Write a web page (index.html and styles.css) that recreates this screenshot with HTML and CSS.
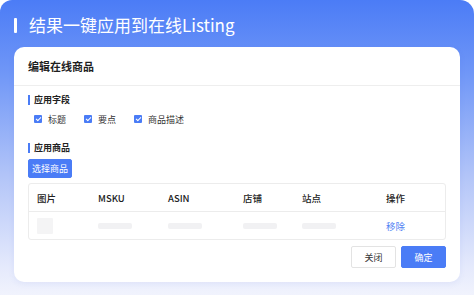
FILE: index.html
```html
<!DOCTYPE html>
<html>
<head>
    <meta charset="UTF-8">
    <title>结果一键应用到在线Listing</title>
    <link rel="stylesheet" href="styles.css">
</head>
<body>
    <div class="panel">
        <div class="panel-title">
            <span class="title-bar"></span>
            <span>结果一键应用到在线Listing</span>
        </div>

        <div class="card">
            <div class="card-header">编辑在线商品</div>
            <div class="card-body">
                <div class="section-title">应用字段</div>
                <div class="checks">
                    <label class="check"><span class="box"></span>标题</label>
                    <label class="check"><span class="box"></span>要点</label>
                    <label class="check"><span class="box"></span>商品描述</label>
                </div>

                <div class="section-title">应用商品</div>
                <button class="btn btn-primary btn-pick">选择商品</button>

                <div class="table">
                    <div class="row head">
                        <div>图片</div>
                        <div>MSKU</div>
                        <div>ASIN</div>
                        <div>店铺</div>
                        <div>站点</div>
                        <div>操作</div>
                    </div>
                    <div class="row">
                        <div><span class="thumb"></span></div>
                        <div><span class="skeleton"></span></div>
                        <div><span class="skeleton"></span></div>
                        <div><span class="skeleton"></span></div>
                        <div><span class="skeleton"></span></div>
                        <div><a class="link">移除</a></div>
                    </div>
                </div>

                <div class="footer">
                    <button class="btn btn-default">关闭</button>
                    <button class="btn btn-primary">确定</button>
                </div>
            </div>
        </div>
    </div>
</body>
</html>
```

FILE: styles.css
```css
body {
    margin: 0;
    background: #ffffff;
    font-family: "Noto Sans CJK SC", "Noto Sans", sans-serif;
    overflow: hidden;
}
.panel {
    width: 474px;
    height: 295px;
    box-sizing: border-box;
    padding: 14px 14px 0 14px;
    border-radius: 12px 14px 0 0;
    background: linear-gradient(180deg, #4b7cf6 0%, #7097f7 25%, #b3c5f8 60%, #e4e9fc 90%, #f1f3fd 100%);
}
.panel-title {
    display: flex;
    align-items: center;
    gap: 12px;
    height: 22px;
    color: #ffffff;
    font-size: 17px;
    line-height: 22px;
    margin-bottom: 11px;
}
.title-bar {
    width: 3px;
    height: 15px;
    background: #ffffff;
    border-radius: 1px;
}
.card {
    background: #ffffff;
    border-radius: 10px;
    height: 235px;
    box-shadow: 0 2px 6px rgba(80, 100, 200, 0.08);
}
.card-header {
    height: 38px;
    line-height: 38px;
    padding: 0 14px;
    font-size: 11px;
    font-weight: bold;
    color: #1f1f1f;
    border-bottom: 1px solid #eeeeee;
}
.card-body {
    padding: 8px 14px 0 14px;
}
.section-title {
    display: flex;
    align-items: center;
    gap: 4px;
    font-size: 9px;
    font-weight: bold;
    color: #222222;
    line-height: 12px;
    height: 12px;
}
.section-title::before {
    content: "";
    width: 2px;
    height: 10px;
    background: #4a7cf6;
}
.checks {
    display: flex;
    padding-left: 6px;
    margin: 7px 0 17px 0;
    height: 12px;
}
.check {
    display: flex;
    align-items: center;
    gap: 6px;
    font-size: 9px;
    color: #333333;
    width: 50px;
}
.check .box {
    width: 8px;
    height: 8px;
    border-radius: 1px;
    background: #4a7cf6;
    position: relative;
}
.check .box::after {
    content: "";
    position: absolute;
    left: 2.5px;
    top: 1px;
    width: 2px;
    height: 4px;
    border: solid #ffffff;
    border-width: 0 1px 1px 0;
    transform: rotate(45deg);
}
.btn {
    font-family: inherit;
    font-size: 9px;
    border-radius: 2px;
    border: 1px solid #4a7cf6;
    cursor: pointer;
    padding: 0;
}
.btn-primary {
    background: #4a7cf6;
    color: #ffffff;
}
.btn-default {
    background: #ffffff;
    color: #333333;
    border-color: #e3e3e3;
}
.btn-pick {
    display: block;
    width: 44px;
    height: 19px;
    margin: 5px 0 5px 0;
}
.table {
    border: 1px solid #ececec;
    border-radius: 3px;
}
.row {
    display: grid;
    grid-template-columns: 61px 70px 75px 59px 84px 1fr;
    padding-left: 8px;
    height: 27px;
    align-items: center;
    font-size: 9.5px;
    color: #222222;
}
.row.head {
    font-weight: 500;
    border-bottom: 1px solid #ececec;
}
.thumb {
    display: block;
    width: 16px;
    height: 16px;
    background: #f4f4f5;
    border-radius: 1px;
}
.skeleton {
    display: block;
    width: 34px;
    height: 6px;
    background: #f1f1f3;
    border-radius: 2px;
}
.link {
    color: #4f80f3;
}
.footer {
    display: flex;
    justify-content: flex-end;
    gap: 5px;
    margin-top: 6px;
}
.footer .btn {
    width: 45px;
    height: 22px;
}
```
